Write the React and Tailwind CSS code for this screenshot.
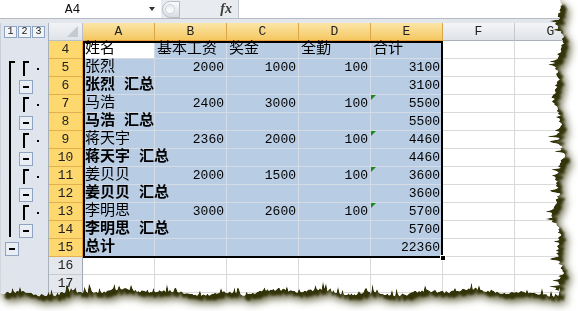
import React from 'react';

const COLS = ['A', 'B', 'C', 'D', 'E', 'F', 'G'];

// sheet rows 4..18; numbers in B..E, flag = green error marker in E
const rows = [
  { n: 4, v: ['姓名', '基本工资', '奖金', '全勤', '合计'], head: true },
  { n: 5, v: ['张烈', 2000, 1000, 100, 3100] },
  { n: 6, v: ['张烈 汇总', '', '', '', 3100], bold: true },
  { n: 7, v: ['马浩', 2400, 3000, 100, 5500], flag: true },
  { n: 8, v: ['马浩 汇总', '', '', '', 5500], bold: true },
  { n: 9, v: ['蒋天宇', 2360, 2000, 100, 4460], flag: true },
  { n: 10, v: ['蒋天宇 汇总', '', '', '', 4460], bold: true },
  { n: 11, v: ['姜贝贝', 2000, 1500, 100, 3600], flag: true },
  { n: 12, v: ['姜贝贝 汇总', '', '', '', 3600], bold: true },
  { n: 13, v: ['李明思', 3000, 2600, 100, 5700], flag: true },
  { n: 14, v: ['李明思 汇总', '', '', '', 5700], bold: true },
  { n: 15, v: ['总计', '', '', '', 22360], bold: true },
  { n: 16 },
  { n: 17 },
  { n: 18 },
];

// jagged "torn paper" outline, generated once
function tornEdge() {
  let seed = 20240611;
  const rand = () => {
    seed = (seed * 16807) % 2147483647;
    return seed / 2147483647;
  };
  const pts = ['0px 0px'];
  for (let y = 0; y <= 292; y += 1.5) {
    let x = 558 + 3 * Math.sin(y / 19) + 2.5 * Math.sin(y / 6.1 + 1) + (rand() - 0.5) * 4;
    if (rand() < 0.14) x -= 3 + rand() * 7;
    pts.push(`${x.toFixed(1)}px ${y}px`);
  }
  for (let x = 560; x >= 0; x -= 1.5) {
    let y = 292 + 2 * Math.sin(x / 27) + 1.5 * Math.sin(x / 8 + 2) + (rand() - 0.5) * 3;
    if (rand() < 0.14) y -= 2 + rand() * 6;
    pts.push(`${x}px ${y.toFixed(1)}px`);
  }
  return `polygon(${pts.join(',')})`;
}

const CLIP = tornEdge();

const mono = "font-['Liberation_Mono','DejaVu_Sans_Mono',monospace]";
const cjk = "font-['Liberation_Mono','Noto_Sans_CJK_SC',sans-serif]";

const Outline = () => {
  const groups = [5, 7, 9, 11, 13];
  const top = (r) => (r - 4) * 18;
  return (
    <svg width="48" height="270" className="block">
      {/* level 1 bracket */}
      <rect x="8" y="20" width="2" height="176" fill="#000" />
      <rect x="8" y="20" width="6" height="2" fill="#000" />
      {groups.map((g) => (
        <g key={g}>
          <rect x="22" y={top(g) + 2} width="2" height="15" fill="#000" />
          <rect x="22" y={top(g) + 2} width="6" height="2" fill="#000" />
          <rect x="36" y={top(g) + 9} width="2" height="2" fill="#000" />
          <rect x="18.5" y={top(g + 1) + 3.5} width="13" height="13" fill="#e9edf4" stroke="#8ea4c2" />
          <rect x="22" y={top(g + 1) + 9} width="6" height="2" fill="#000" />
        </g>
      ))}
      {/* level 1 collapse */}
      <rect x="4.5" y={top(15) + 3.5} width="13" height="13" fill="#e9edf4" stroke="#8ea4c2" />
      <rect x="8" y={top(15) + 9} width="6" height="2" fill="#000" />
    </svg>
  );
};

const Cell = ({ value, col, row }) => {
  const sel = row.n >= 4 && row.n <= 15 && col < 5;
  const active = row.n === 4 && col === 0;
  const isNum = typeof value === 'number';
  return (
    <div
      className={`relative w-[72px] h-[18px] shrink-0 border-r border-b flex items-end ${
        sel ? 'border-[#d5dce6]' : 'border-[#d9d9d9]'
      } ${sel && !active ? 'bg-[#b8cce4]' : 'bg-white'} ${isNum ? 'justify-end pr-[2px]' : 'pl-[2px]'}`}
    >
      {col === 4 && row.flag && (
        <span className="absolute top-0 left-0 w-0 h-0 border-t-[5px] border-t-[#1b8a1b] border-r-[5px] border-r-transparent" />
      )}
      {value !== undefined && value !== '' && (
        <span
          className={`relative z-10 whitespace-pre text-black ${
            isNum
              ? `${mono} text-[13px] leading-[16px]`
              : `${cjk} text-[15px] leading-[17px] ${row.bold ? 'font-bold' : ''}`
          }`}
        >
          {value}
        </span>
      )}
    </div>
  );
};

export default function App() {
  return (
    <div className="w-[578px] h-[311px] bg-white overflow-hidden">
      <div className="[filter:drop-shadow(5px_5px_1px_#33330a)_drop-shadow(2px_3px_4px_#50502a)]">
        <div style={{ clipPath: CLIP }} className="w-[578px] h-[311px] bg-white flex flex-col overflow-hidden">
          {/* formula bar */}
          <div className="h-[19px] shrink-0 flex border-b border-[#b4bbc5]">
            <div className="w-[161px] shrink-0 bg-white flex items-center">
              <span className={`${mono} w-[145px] text-center text-[13px] text-[#111] leading-none`}>A4</span>
              <span className="ml-[4px] w-0 h-0 border-l-[3px] border-r-[3px] border-t-[4px] border-l-transparent border-r-transparent border-t-[#333]" />
            </div>
            <div className="w-[77px] shrink-0 bg-[#e8ebef] flex items-center">
              <div className="ml-[1px] w-[18px] h-[17px] rounded-l-full border border-[#b6bcc5] bg-gradient-to-b from-[#fbfbfc] to-[#d9dde3] flex items-center pl-[2px]">
                <div className="w-[10px] h-[10px] rounded-full bg-gradient-to-b from-[#e9ecf0] to-[#ffffff] border border-[#d0d4da]" />
              </div>
              <span className="ml-auto mr-[6px] font-['Liberation_Serif',serif] italic font-bold text-[14px] leading-none text-[#3a3a3a]">
                fx
              </span>
            </div>
            <div className="flex-1 bg-white border-l border-[#c2c8d0]" />
          </div>
          <div className="h-[4px] shrink-0 bg-[#e3e7ec]" />

          <div className="flex">
            {/* outline pane */}
            <div className="w-[49px] shrink-0 bg-[#dfe4ed] border-r border-[#a9b1bc] border-l border-l-[#c8cdd5]">
              <div className="h-[18px] flex items-center gap-[1px] pl-[3px]">
                {['1', '2', '3'].map((l) => (
                  <div
                    key={l}
                    className={`${mono} w-[13px] h-[12px] border border-[#8ea4c2] bg-[#f2f4f8] text-[10px] leading-[10px] text-[#1a1a1a] flex items-center justify-center`}
                  >
                    {l}
                  </div>
                ))}
              </div>
              <Outline />
            </div>

            {/* grid */}
            <div className="relative flex flex-col">
              <div className="flex h-[18px]">
                <div className="w-[34px] shrink-0 bg-gradient-to-b from-[#f1f3f6] to-[#dfe3e8] border-r border-b border-[#b9c0c9] flex items-end justify-end pr-[4px] pb-[3px]">
                  <span className="w-0 h-0 border-l-[11px] border-l-transparent border-b-[11px] border-b-[#c5cad1]" />
                </div>
                {COLS.map((c, i) => (
                  <div
                    key={c}
                    className={`${mono} w-[72px] shrink-0 text-[13px] text-[#222] flex items-center justify-center border-r border-b ${
                      i < 5
                        ? 'bg-gradient-to-b from-[#fbe6a7] to-[#f5c75f] border-r-[#d9a747] border-b-[#e89b34]'
                        : 'bg-gradient-to-b from-[#f4f5f7] to-[#dfe2e7] border-r-[#c4c9d0] border-b-[#a9b0b9]'
                    }`}
                  >
                    {c}
                  </div>
                ))}
              </div>
              {rows.map((row) => {
                const sel = row.n <= 15;
                return (
                  <div key={row.n} className="flex h-[18px]">
                    <div
                      className={`${mono} w-[34px] shrink-0 text-[13px] text-[#222] flex items-center justify-center border-r border-b ${
                        sel
                          ? 'bg-[#fcd86e] border-b-[#e3b04f] border-r-[#ea9c30]'
                          : 'bg-[#e4e7ec] border-b-[#c6cbd2] border-r-[#9fa7b2]'
                      }`}
                    >
                      {row.n}
                    </div>
                    {COLS.map((c, i) => (
                      <Cell key={c} col={i} row={row} value={row.v ? row.v[i] : undefined} />
                    ))}
                  </div>
                );
              })}
              {/* selection border A4:E15 */}
              <div className="absolute left-[34px] top-[18px] w-[360px] h-[217px] border-2 border-black pointer-events-none z-20" />
              <div className="absolute left-[391px] top-[232px] w-[6px] h-[6px] bg-black border border-white z-20" />
            </div>
          </div>
        </div>
      </div>
    </div>
  );
}
